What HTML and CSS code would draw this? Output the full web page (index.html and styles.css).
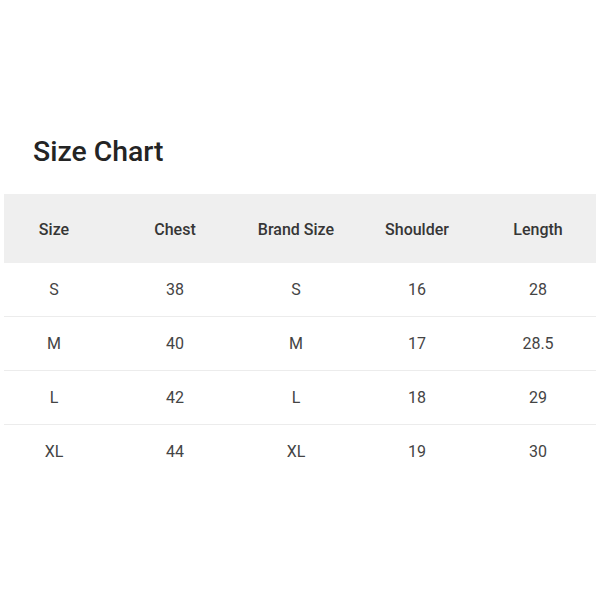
FILE: index.html
```html
<!DOCTYPE html>
<html>
<head>
<meta charset="utf-8">
<link rel="stylesheet" href="styles.css">
</head>
<body>
<div class="page">
  <h1 class="title">Size Chart</h1>
  <div class="chart">
    <div class="row head">
      <div class="cells"><span>Size</span><span>Chest</span><span>Brand Size</span><span>Shoulder</span><span>Length</span></div>
    </div>
    <div class="row">
      <div class="cells"><span>S</span><span>38</span><span>S</span><span>16</span><span>28</span></div>
    </div>
    <div class="row">
      <div class="cells"><span>M</span><span>40</span><span>M</span><span>17</span><span>28.5</span></div>
    </div>
    <div class="row">
      <div class="cells"><span>L</span><span>42</span><span>L</span><span>18</span><span>29</span></div>
    </div>
    <div class="row last">
      <div class="cells"><span>XL</span><span>44</span><span>XL</span><span>19</span><span>30</span></div>
    </div>
  </div>
</div>
</body>
</html>
```
FILE: styles.css
```css
html, body {
  margin: 0;
  padding: 0;
  background: #ffffff;
}
body {
  font-family: Roboto, "Noto Sans", sans-serif;
  width: 600px;
  height: 600px;
  overflow: hidden;
}
.page {
  padding: 135px 4px 0 4px;
}
.title {
  margin: 0 0 25px 29px;
  font-size: 28.4px;
  line-height: 34px;
  font-weight: 500;
  color: #242424;
}
.chart {
  width: 592px;
  overflow: hidden;
}
.row {
  height: 53px;
  border-bottom: 1px solid #ececec;
  display: flex;
  align-items: center;
}
.row.head {
  height: 69px;
  padding-top: 2px;
  box-sizing: border-box;
  background: #efefef;
  border-bottom: none;
}
.row.last {
  border-bottom: 1px solid transparent;
}
.cells {
  display: grid;
  grid-template-columns: repeat(5, 121px);
  margin-left: -10.5px;
  font-size: 16px;
  line-height: 20px;
  color: #444444;
}
.cells span {
  text-align: center;
}
.head .cells {
  font-weight: 500;
  color: #363636;
}
```
